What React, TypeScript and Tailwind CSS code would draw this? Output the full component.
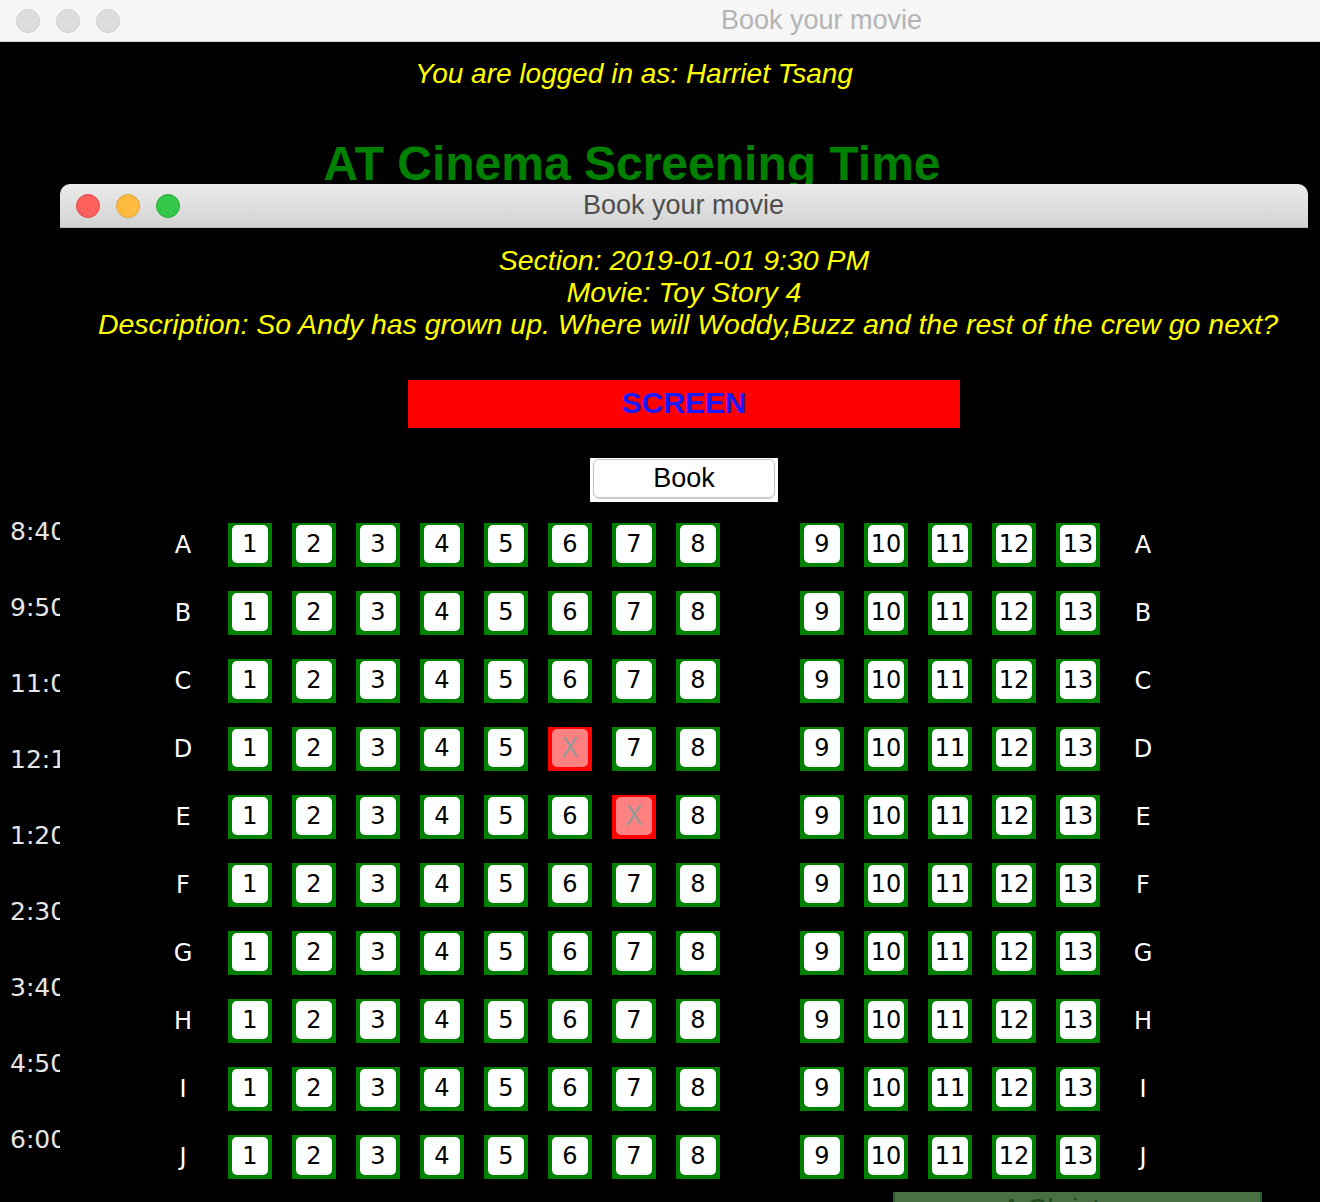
const rows = ["A", "B", "C", "D", "E", "F", "G", "H", "I", "J"];
const leftSeats = [1, 2, 3, 4, 5, 6, 7, 8];
const rightSeats = [9, 10, 11, 12, 13];
const booked = ["D6", "E7"];
const times = ["8:40 AM", "9:50 AM", "11:00 AM", "12:10 PM", "1:20 PM", "2:30 PM", "3:40 PM", "4:50 PM", "6:00 PM"];

function Seat({ row, n }: { row: string; n: number }) {
  const taken = booked.includes(row + n);
  if (taken) {
    return (
      <div className="flex h-[44px] w-[44px] bg-[#ff0000] px-[4px] pt-[2px] pb-[4px]">
        <div className="flex flex-1 items-center justify-center rounded-[5px] bg-[#ff8080] text-[26px] leading-none text-[#9a9a9a]">
          X
        </div>
      </div>
    );
  }
  return (
    <div className="flex h-[44px] w-[44px] bg-[#008000] px-[4px] pt-[2px] pb-[4px]">
      <div className="flex flex-1 items-center justify-center rounded-[5px] bg-white text-[24px] leading-none text-black">
        {n}
      </div>
    </div>
  );
}

function Lights({ active }: { active: boolean }) {
  const colors = active
    ? ["bg-[#fc605c] border-[#de4a45]", "bg-[#fdbc40] border-[#de9f34]", "bg-[#34c84a] border-[#27aa35]"]
    : ["bg-[#dddddd] border-[#d0d0d0]", "bg-[#dddddd] border-[#d0d0d0]", "bg-[#dddddd] border-[#d0d0d0]"];
  return (
    <div className="flex gap-[16px]">
      {colors.map((c, i) => (
        <div key={i} className={"h-[24px] w-[24px] rounded-full border " + c} />
      ))}
    </div>
  );
}

export default function App() {
  return (
    <div className="relative h-[1202px] w-[1320px] overflow-hidden bg-black font-['DejaVu_Sans',sans-serif]">
      {/* outer window */}
      <div className="flex h-[42px] items-center border-b border-[#d4d4d4] bg-[#f6f6f6] pl-[16px]">
        <Lights active={false} />
        <div className="ml-[601px] font-['Liberation_Sans',sans-serif] text-[27px] text-[#b4b4b4]">Book your movie</div>
      </div>
      <div className="flex flex-col">
        <div className="mt-[16px] w-[1268px] text-center font-['Liberation_Sans',sans-serif] text-[28px] leading-[32px] italic text-[#ffff00]">
          You are logged in as: Harriet Tsang
        </div>
        <div className="mt-[50px] w-[1264px] text-center font-['Liberation_Sans',sans-serif] text-[48px] leading-[48px] font-bold text-[#008000]">
          AT Cinema Screening Time
        </div>
        <div className="mt-[306px] flex flex-col pl-[10px]">
          {times.map((t) => (
            <div key={t} className="flex h-[76px] items-center whitespace-nowrap text-[25px] font-medium text-[#e6e6e6]">
              {t}
            </div>
          ))}
        </div>
        <div className="ml-[893px] mt-[2px] flex h-[60px] w-[369px] justify-center border-2 border-[#2f5a2c] bg-[#4b6f45] pt-[6px] font-['Liberation_Sans',sans-serif] text-[28px] text-[#1f4a1c]">
          A Christmas
        </div>
      </div>

      {/* booking window on top */}
      <div className="absolute left-[60px] top-[184px] flex h-[1008px] w-[1248px] flex-col bg-black">
        <div className="flex h-[44px] items-center rounded-t-[10px] border-b border-[#b5b5b5] bg-gradient-to-b from-[#ececec] to-[#d2d2d2] pl-[16px]">
          <Lights active={true} />
          <div className="ml-[403px] font-['Liberation_Sans',sans-serif] text-[27px] text-[#4d4d4d]">Book your movie</div>
        </div>
        <div className="mt-[16px] flex flex-col items-center font-['Liberation_Sans',sans-serif] text-[28.5px] leading-[32px] italic text-[#ffff00]">
          <div>Section: 2019-01-01 9:30 PM</div>
          <div>Movie: Toy Story 4</div>
          <div className="pl-[8px]">Description: So Andy has grown up. Where will Woddy,Buzz and the rest of the crew go next?</div>
        </div>
        <div className="mx-auto mt-[40px] flex h-[48px] w-[552px] items-center justify-center bg-[#ff0000] pb-[4px] font-['Liberation_Sans',sans-serif] text-[30px] font-bold text-[#1a1aff]">
          SCREEN
        </div>
        <div className="mx-auto mt-[30px] flex h-[44px] w-[188px] bg-white px-[3px] pt-[1px] pb-[4px]">
          <div className="flex flex-1 items-center justify-center rounded-[6px] border border-[#c4c4c4] font-['Liberation_Sans',sans-serif] text-[27px] text-black shadow-[0_1px_1px_rgba(0,0,0,0.2)]">
            Book
          </div>
        </div>
        <div className="mt-[21px] flex flex-col gap-[24px] pl-[93px]">
          {rows.map((r) => (
            <div key={r} className="flex items-center">
              <div className="w-[60px] text-center text-[24px] text-white">{r}</div>
              <div className="ml-[15px] flex gap-[20px]">
                {leftSeats.map((n) => (
                  <Seat key={n} row={r} n={n} />
                ))}
              </div>
              <div className="ml-[80px] flex gap-[20px]">
                {rightSeats.map((n) => (
                  <Seat key={n} row={r} n={n} />
                ))}
              </div>
              <div className="ml-[13px] w-[60px] text-center text-[24px] text-white">{r}</div>
            </div>
          ))}
        </div>
      </div>
    </div>
  );
}
